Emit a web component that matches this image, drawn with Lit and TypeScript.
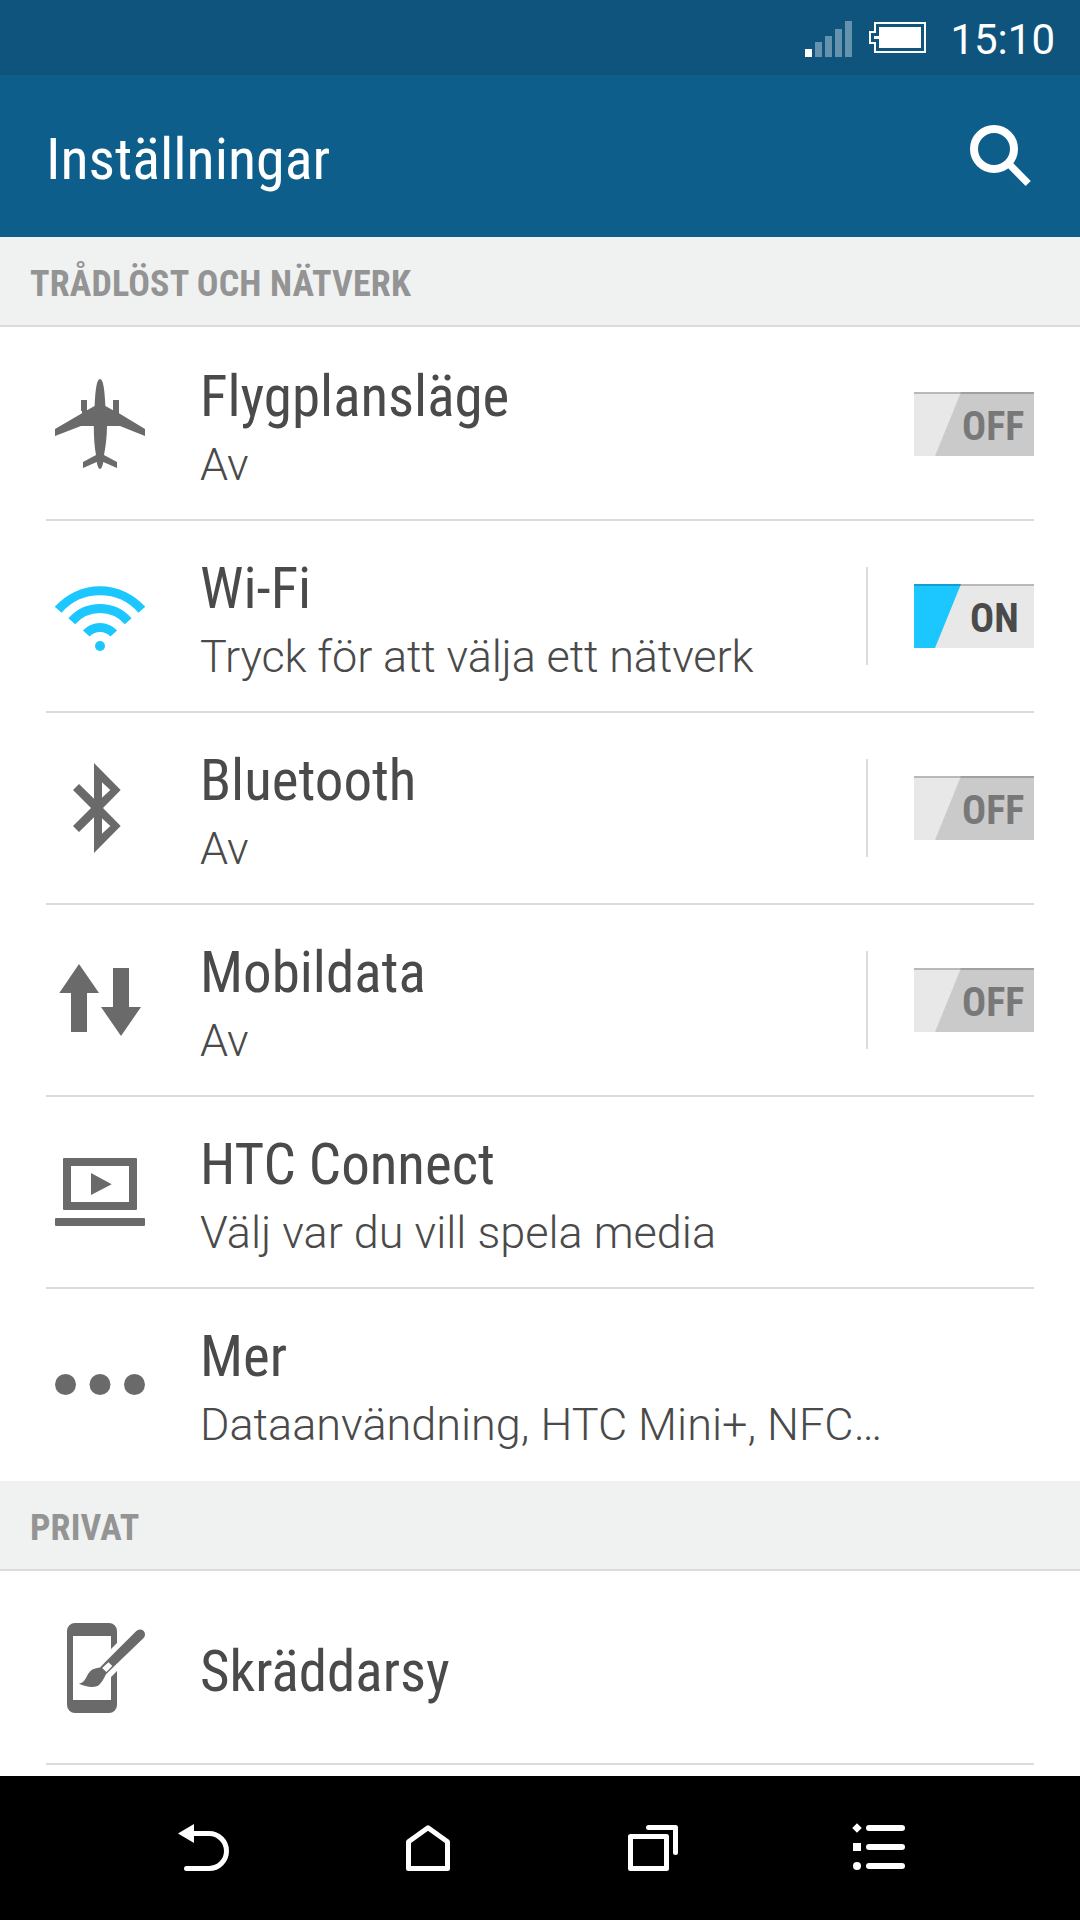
import { LitElement, html, svg, css } from "lit";
import { customElement, property } from "lit/decorators.js";

const icons: Record<string, unknown> = {
  plane: svg`<path d="M45 0C48 0 49.6 9 50.4 27L58 31.2V21H64V34.2L90 50V57L65 47H52C52 58 50.5 68 49 76L62 83V89L48.3 83C47.5 87 46.5 90 45 90S42.5 87 41.7 83L28 89V83L41 76C39.5 68 38.8 58 38.8 47H26L0 57V50L27 34.2V32H26V21H32V31.2L39.6 27C40.4 9 42 0 45 0Z"/>`,
  wifi: svg`<g fill="none" stroke="currentColor" stroke-width="9"><path d="M3.2 38.8A55.5 55.5 0 0 1 86.8 38.8"/><path d="M16.8 50.3A37.5 37.5 0 0 1 73.2 50.3"/><path d="M31.25 62.6A18.5 18.5 0 0 1 58.75 62.6"/></g><circle cx="45" cy="75" r="5"/>`,
  bluetooth: svg`<path fill-rule="evenodd" d="M39 0L65.7 27L48 45L65.7 63L39 90V54.3L24 69L18 63L36 45L18 27L24 21L39 35.7ZM47 19.3V34.7L55.3 27ZM47 55.3V70.7L55.3 63Z"/>`,
  data: svg`<path d="M24 9L44 38H32V77H16V38H4.3ZM58 13H74V52H86L66 81L46 52H58Z"/>`,
  cast: svg`<path fill-rule="evenodd" d="M9 11H81Q82 11 82 12V62Q82 63 81 63H9Q8 63 8 62V12Q8 11 9 11ZM16 19V55H74V19ZM36 26L56.7 37.3L36 48Z"/><rect y="71" width="90" height="8" rx="1"/>`,
  more: svg`<circle cx="10.5" cy="45.5" r="10.5"/><circle cx="45" cy="45.5" r="10.5"/><circle cx="79.5" cy="45.5" r="10.5"/>`,
  brush: svg`<path fill-rule="evenodd" d="M20 0H54A8 8 0 0 1 62 8V20L56 26V13H18V77H56V54L62 48V82A8 8 0 0 1 54 90H20A8 8 0 0 1 12 82V8A8 8 0 0 1 20 0Z"/><path fill-rule="evenodd" d="M81.3 8A5 5 0 0 1 88.6 15L59 43.6L51 51.2C49 55 47 59.5 43.5 62.5C40 65 30 64 24 60.7C27 60 29 58.5 31 55C34 49 36 45.5 45 44.6L53 36.3ZM53.5 39.2L47.2 45L51.4 49L57.3 43Z"/>`,
};

@customElement("toggle-switch")
export class ToggleSwitch extends LitElement {
  @property({ type: Boolean, reflect: true }) on = false;

  static styles = css`
    :host { display: block; }
    .track { display: grid; width: 120px; height: 64px; background: #cacaca; color: #787878; font: 700 40px/58px "Roboto Condensed", Roboto, sans-serif; font-stretch: 75%; }
    .on { background: #e8e8e8; color: #4a4a4a; }
    .thumb, .edge, .word { grid-area: 1 / 1; }
    .thumb { width: 47px; background: #e8e8e8; clip-path: polygon(0 0, 47px 0, 21px 64px, 0 64px); }
    .on .thumb { background: #1cc7ff; }
    .edge { height: 2px; background: rgba(0, 0, 0, 0.2); z-index: 1; }
    .word { padding-left: 48px; padding-top: 6px; white-space: nowrap; }
    .on .word { padding-left: 56px; }
  `;

  render() {
    return html`<div class="track ${this.on ? "on" : ""}">
      <div class="thumb"></div><div class="edge"></div><div class="word">${this.on ? "ON" : "OFF"}</div>
    </div>`;
  }
}

interface Item {
  icon: string;
  title: string;
  sub?: string;
  snug?: boolean;
  toggle?: "on" | "off";
  divider?: boolean;
}

const network: Item[] = [
  { icon: "plane", title: "Flygplansläge", sub: "Av", toggle: "off" },
  { icon: "wifi", title: "Wi-Fi", sub: "Tryck för att välja ett nätverk", snug: true, toggle: "on", divider: true },
  { icon: "bluetooth", title: "Bluetooth", sub: "Av", toggle: "off", divider: true },
  { icon: "data", title: "Mobildata", sub: "Av", toggle: "off", divider: true },
  { icon: "cast", title: "HTC Connect", sub: "Välj var du vill spela media" },
  { icon: "more", title: "Mer", sub: "Dataanvändning, HTC Mini+, NFC…" },
];
const personal: Item[] = [{ icon: "brush", title: "Skräddarsy" }];

@customElement("app-root")
export class AppRoot extends LitElement {
  static styles = css`
    :host { display: block; }
    * { box-sizing: border-box; }
    svg { display: block; flex: none; }
    .screen { width: 1080px; height: 1920px; display: flex; flex-direction: column; overflow: hidden; background: #fff; font-family: Roboto, sans-serif; }
    .status { height: 75px; flex: none; background: #0e547d; display: flex; align-items: flex-start; justify-content: flex-end; padding-right: 25px; color: #fff; }
    .clock { font-size: 42px; line-height: 50px; padding-top: 15px; margin-left: 22px; }
    .bar { height: 162px; flex: none; background: #0d5e8b; display: flex; justify-content: space-between; padding: 0 45px 0 46px; color: #fff; }
    .heading { font: 400 58px/68px "Roboto Condensed", Roboto, sans-serif; font-stretch: 75%; padding-top: 50px; }
    .search { margin-top: 46px; }
    .content { flex: 1; min-height: 0; overflow: hidden; }
    .section { height: 90px; background: #f0f2f1; border-bottom: 2px solid #dcdcdc; padding: 26px 30px 0; color: #949494; font: 700 36px/42px "Roboto Condensed", Roboto, sans-serif; font-stretch: 75%; letter-spacing: 0.16px; }
    .list { padding: 2px 46px 0; }
    .row { height: 192px; border-bottom: 2px solid #dcdcdc; display: flex; align-items: center; padding-left: 9px; }
    .row.last { border-bottom-color: transparent; }
    .icon { color: #6a6a6a; fill: currentColor; }
    .icon.active { color: #1cc7ff; }
    .text { flex: 1; margin-left: 55px; padding-top: 6px; color: #4a4a4a; }
    .title { font: 400 57px/67px "Roboto Condensed", Roboto, sans-serif; font-stretch: 75%; white-space: nowrap; }
    .sub { font-size: 45px; font-weight: 300; line-height: 53px; margin-top: 8px; white-space: nowrap; }
    .sub.snug { letter-spacing: -0.14px; }
    .divider { width: 2px; height: 98px; background: #dcdcdc; margin-right: 46px; }
    .nav { height: 144px; flex: none; background: #000; display: flex; align-items: center; gap: 165px; padding-left: 173px; }
    .glyph { fill: none; stroke: #fff; stroke-width: 5; stroke-linecap: round; stroke-linejoin: round; }
    .thick { stroke-width: 6; }
    .solid { fill: #fff; stroke: none; }
  `;

  private row(item: Item, last: boolean) {
    return html`<div class="row ${last ? "last" : ""}">
      <svg class="icon ${item.toggle === "on" ? "active" : ""}" width="90" height="90" viewBox="0 0 90 90">${icons[item.icon]}</svg>
      <div class="text">
        <div class="title">${item.title}</div>
        ${item.sub ? html`<div class="sub ${item.snug ? "snug" : ""}">${item.sub}</div>` : ""}
      </div>
      ${item.divider ? html`<div class="divider"></div>` : ""}
      ${item.toggle ? html`<toggle-switch ?on=${item.toggle === "on"}></toggle-switch>` : ""}
    </div>`;
  }

  render() {
    return html`<div class="screen">
      <div class="status">
        <svg width="123" height="75" viewBox="805 0 123 75">
          <path fill="#fff" d="M805 49h7v8h-7z" />
          <path fill="#6593ae" d="M815 42h7v15h-7zM825 36h7v21h-7zM835 29h7v28h-7zM845 21h7v36h-7z" />
          <path fill="none" stroke="#fff" stroke-width="2" d="M875 23H925V52H875V43H870V32H875Z" />
          <path fill="#fff" d="M879 27H921V48H879V39H874V36H879Z" />
        </svg>
        <div class="clock">15:10</div>
      </div>
      <div class="bar">
        <div class="heading">Inställningar</div>
        <svg class="search" width="70" height="70" viewBox="965 121 70 70">
          <circle cx="994" cy="149" r="20" fill="none" stroke="#fff" stroke-width="8" />
          <path d="M1009 164L1028.2 183.5" stroke="#fff" stroke-width="7.2" />
        </svg>
      </div>
      <div class="content">
        <div class="section">TRÅDLÖST OCH NÄTVERK</div>
        <div class="list">${network.map((n, i) => this.row(n, i === network.length - 1))}</div>
        <div class="section">PRIVAT</div>
        <div class="list">${personal.map((n) => this.row(n, false))}</div>
      </div>
      <div class="nav">
        <svg class="glyph" width="60" height="60" viewBox="173 1818 60 60">
          <path class="solid" d="M178 1833.5L194 1824V1843Z" />
          <path d="M192 1833.5H209A17.5 17.5 0 0 1 209 1868.5H186.5" />
        </svg>
        <svg class="glyph" width="60" height="60" viewBox="398 1818 60 60">
          <path d="M408.5 1868.5V1841.8L428 1827.8L447.5 1841.8V1868.5Z" />
        </svg>
        <svg class="glyph" width="60" height="60" viewBox="623 1818 60 60">
          <path d="M630.5 1836.5H666.5V1868.5H630.5ZM648.5 1827.5H675.5V1852.5" />
        </svg>
        <svg class="glyph" width="60" height="60" viewBox="848 1818 60 60">
          <path class="thick" d="M869 1828H902M869 1847H902M869 1866H902" />
          <path class="solid" d="M857 1823.2L861.8 1828L857 1832.8L852.2 1828ZM853 1843H861V1851H853Z" />
          <circle class="solid" cx="857" cy="1866" r="4" />
        </svg>
      </div>
    </div>`;
  }
}
